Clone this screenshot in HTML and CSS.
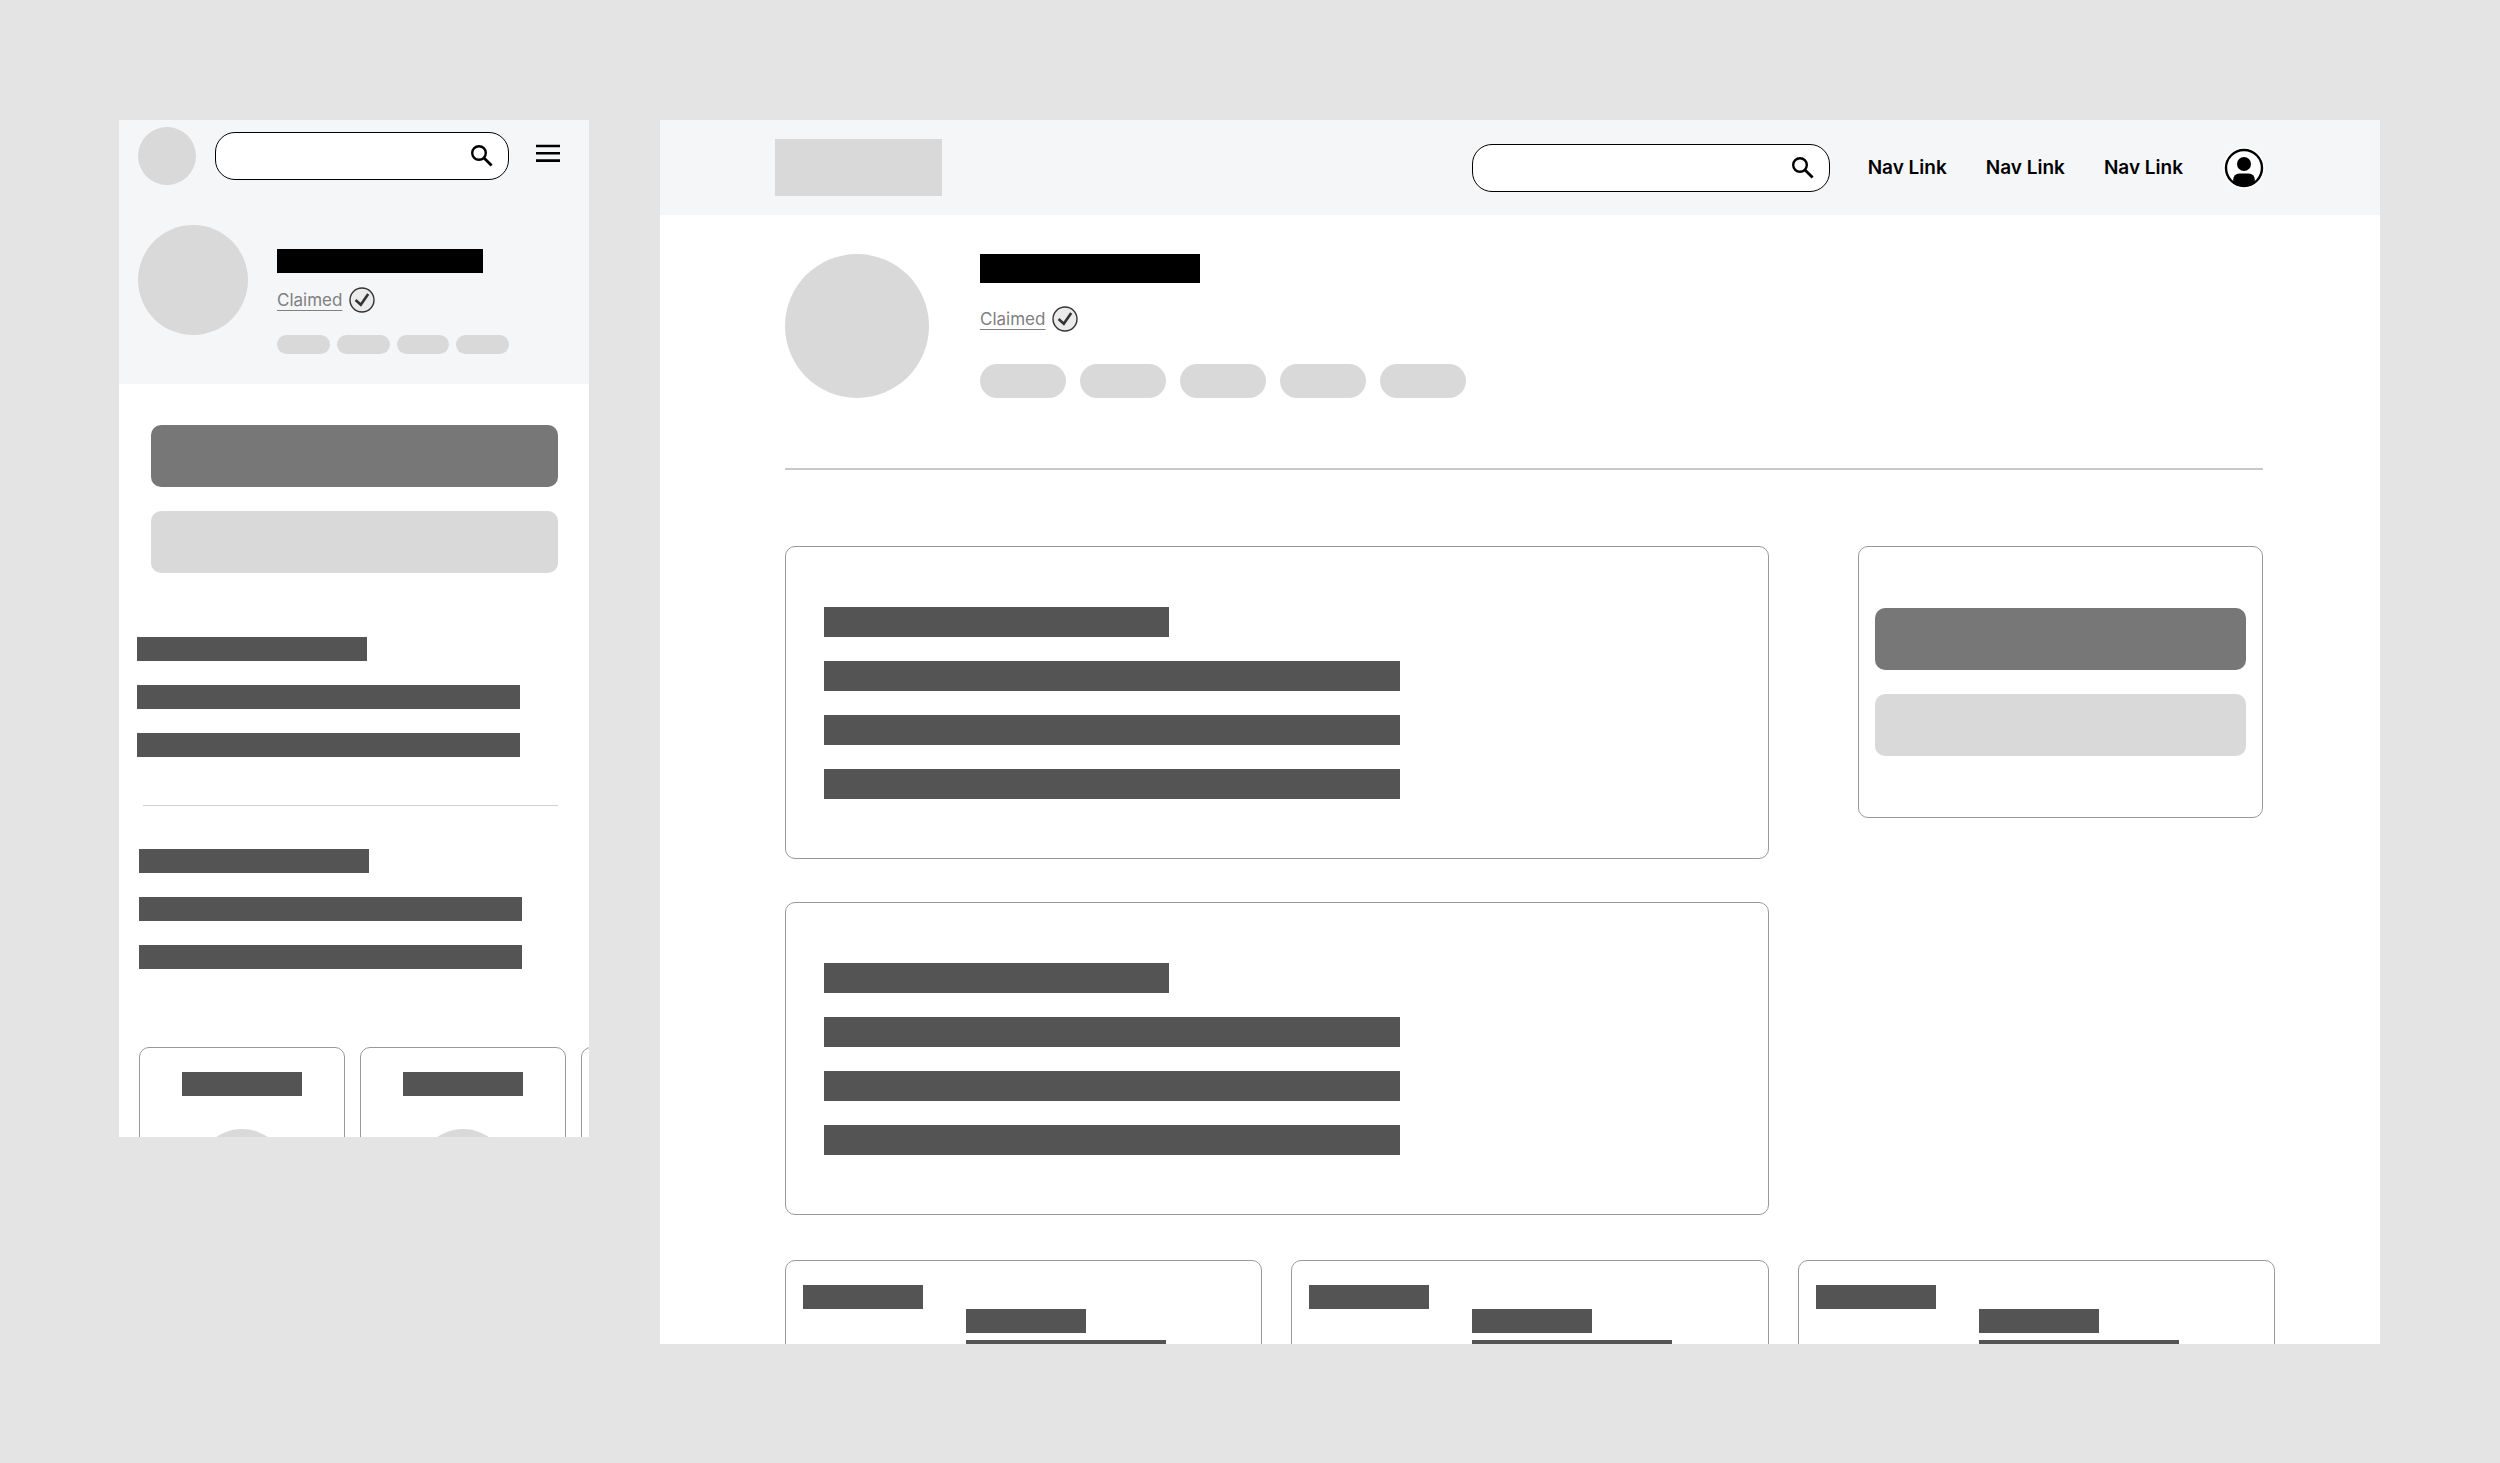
FILE: index.html
```html
<!DOCTYPE html>
<html lang="en">
<head>
    <meta charset="UTF-8">
    <meta name="viewport" content="width=device-width, initial-scale=1.0">
    <title>Profile Page Wireframes</title>
    <link rel="stylesheet" href="styles.css">
</head>
<body>
    <!-- Mobile -->
    <section class="frame mobile">
        <header class="mobile-header">
            <div class="mobile-bar">
                <div class="mobile-logo"></div>
                <form class="search">
                    <input type="search" class="search-input" aria-label="Search">
                    <button type="button" class="icon-btn" aria-label="Submit search">
                        <svg width="22" height="22" viewBox="0 0 22 22" fill="none" stroke="#000">
                            <circle cx="8" cy="8" r="6.8" stroke-width="2.4"/>
                            <path d="M13 13l7.6 7.6" stroke-width="2.8"/>
                        </svg>
                    </button>
                </form>
                <button type="button" class="icon-btn" aria-label="Menu">
                    <svg width="24" height="24" viewBox="0 0 24 24" fill="none" stroke="#000" stroke-width="2.6">
                        <path d="M0 2h24M0 9.3h24M0 16.6h24"/>
                    </svg>
                </button>
            </div>
            <div class="profile">
                <div class="avatar"></div>
                <div class="profile-info">
                    <div class="name"></div>
                    <div class="claimed">
                        <a href="#" class="claimed-link">Claimed</a>
                        <svg width="26" height="26" viewBox="0 0 26 26" fill="none" stroke="#333">
                            <circle cx="13" cy="13" r="12" fill="#ebebeb" stroke-width="1.4"/>
                            <path d="M6.6 13l5.2 4.7 7.4-10.6" stroke-width="2.6"/>
                        </svg>
                    </div>
                    <div class="pills">
                        <span class="pill"></span>
                        <span class="pill"></span>
                        <span class="pill"></span>
                        <span class="pill"></span>
                    </div>
                </div>
            </div>
        </header>

        <div class="actions">
            <button type="button" class="btn btn-primary" aria-label="Primary action"></button>
            <button type="button" class="btn" aria-label="Secondary action"></button>
        </div>

        <div class="text-block">
            <div class="line line-title"></div>
            <div class="line"></div>
            <div class="line"></div>
        </div>
        <hr class="divider">
        <div class="text-block">
            <div class="line line-title"></div>
            <div class="line"></div>
            <div class="line"></div>
        </div>

        <div class="carousel">
            <div class="mini-card">
                <div class="line line-label"></div>
                <div class="mini-avatar"></div>
            </div>
            <div class="mini-card">
                <div class="line line-label"></div>
                <div class="mini-avatar"></div>
            </div>
            <div class="mini-card">
                <div class="line line-label"></div>
                <div class="mini-avatar"></div>
            </div>
        </div>
    </section>

    <!-- Desktop -->
    <section class="frame desktop">
        <header class="desktop-header">
            <div class="desktop-logo"></div>
            <form class="search">
                <input type="search" class="search-input" aria-label="Search">
                <button type="button" class="icon-btn" aria-label="Submit search">
                    <svg width="22" height="22" viewBox="0 0 22 22" fill="none" stroke="#000">
                        <circle cx="8" cy="8" r="6.8" stroke-width="2.4"/>
                        <path d="M13 13l7.6 7.6" stroke-width="2.8"/>
                    </svg>
                </button>
            </form>
            <nav class="nav">
                <a href="#" class="nav-link">Nav Link</a>
                <a href="#" class="nav-link">Nav Link</a>
                <a href="#" class="nav-link">Nav Link</a>
            </nav>
            <button type="button" class="icon-btn" aria-label="Account">
                <svg width="42" height="42" viewBox="0 0 42 42">
                    <circle cx="21" cy="21" r="21" fill="#fff"/>
                    <circle cx="21" cy="21" r="18" fill="none" stroke="#000" stroke-width="2.4"/>
                    <circle cx="21" cy="17" r="7" fill="#000"/>
                    <path d="M10.2 35v-2.5a6 6 0 0 1 6-6h9.6a6 6 0 0 1 6 6V35A18.5 18.5 0 0 1 10.2 35z" fill="#000"/>
                </svg>
            </button>
        </header>

        <main class="content">
            <div class="profile">
                <div class="avatar"></div>
                <div class="profile-info">
                    <div class="name"></div>
                    <div class="claimed">
                        <a href="#" class="claimed-link">Claimed</a>
                        <svg width="26" height="26" viewBox="0 0 26 26" fill="none" stroke="#333">
                            <circle cx="13" cy="13" r="12" fill="#ebebeb" stroke-width="1.4"/>
                            <path d="M6.6 13l5.2 4.7 7.4-10.6" stroke-width="2.6"/>
                        </svg>
                    </div>
                    <div class="pills">
                        <span class="pill"></span>
                        <span class="pill"></span>
                        <span class="pill"></span>
                        <span class="pill"></span>
                        <span class="pill"></span>
                    </div>
                </div>
            </div>

            <hr class="divider">

            <div class="columns">
                <div class="main-column">
                    <div class="card">
                        <div class="line line-title"></div>
                        <div class="line"></div>
                        <div class="line"></div>
                        <div class="line"></div>
                    </div>
                    <div class="card">
                        <div class="line line-title"></div>
                        <div class="line"></div>
                        <div class="line"></div>
                        <div class="line"></div>
                    </div>
                </div>
                <aside class="sidebar">
                    <button type="button" class="btn btn-primary" aria-label="Primary action"></button>
                    <button type="button" class="btn" aria-label="Secondary action"></button>
                </aside>
            </div>

            <div class="review-row">
                <div class="review">
                    <div class="line line-label"></div>
                    <div class="review-body">
                        <div class="line line-label"></div>
                        <div class="line"></div>
                    </div>
                </div>
                <div class="review">
                    <div class="line line-label"></div>
                    <div class="review-body">
                        <div class="line line-label"></div>
                        <div class="line"></div>
                    </div>
                </div>
                <div class="review">
                    <div class="line line-label"></div>
                    <div class="review-body">
                        <div class="line line-label"></div>
                        <div class="line"></div>
                    </div>
                </div>
            </div>
        </main>
    </section>
</body>
</html>
```
FILE: styles.css
```css
* {
    margin: 0;
    padding: 0;
    box-sizing: border-box;
}

body {
    display: grid;
    grid-template-columns: minmax(0, 470fr) minmax(0, 1720fr);
    gap: 71px;
    align-items: start;
    min-height: 100vh;
    padding: 120px 120px 120px 119px;
    background: #e4e4e4;
    color: #000;
    font-family: Inter, 'Liberation Sans', sans-serif;
}

.frame {
    background: #fff;
    overflow: hidden;
}

/* Shared parts */
.search {
    display: flex;
    align-items: center;
    height: 48px;
    padding-right: 15px;
    background: #fff;
    border: 1px solid #000;
    border-radius: 20px;
}

.search-input {
    flex: 1;
    min-width: 0;
    height: 100%;
    padding: 0 16px;
    border: none;
    outline: none;
    background: transparent;
    font: inherit;
}

.icon-btn {
    display: flex;
    flex-shrink: 0;
    border: none;
    background: none;
    cursor: pointer;
}

.profile {
    display: flex;
}

.avatar {
    flex-shrink: 0;
    width: 144px;
    height: 144px;
    border-radius: 50%;
    background: #d9d9d9;
}

.profile-info {
    flex: 1;
    min-width: 0;
}

.name {
    width: 220px;
    height: 29px;
    background: #000;
}

.claimed {
    display: flex;
    align-items: center;
    gap: 7px;
}

.claimed-link {
    color: #808080;
    font-size: 17px;
    line-height: 26px;
    text-underline-offset: 4px;
    text-decoration-thickness: 1px;
}

.pills {
    display: flex;
    gap: 14px;
}

.pill {
    width: 86px;
    height: 34px;
    border-radius: 17px;
    background: #d9d9d9;
}

.divider {
    border: none;
    height: 2px;
    background: #d0d0d0;
}

.btn {
    display: block;
    width: 100%;
    height: 62px;
    border: none;
    border-radius: 10px;
    background: #d9d9d9;
    cursor: pointer;
}

.btn-primary {
    margin-bottom: 24px;
    background: #777;
}

.line {
    height: 24px;
    max-width: 100%;
    background: #545454;
}

.line-label {
    width: 120px;
}

/* Mobile */
.mobile-header {
    padding: 7px 29px 30px 19px;
    background: #f4f6f8;
}

.mobile-bar {
    display: flex;
    align-items: center;
}

.mobile-bar .search {
    flex: 1;
    min-width: 0;
    margin: 0 27px 0 19px;
}

.mobile-logo {
    flex-shrink: 0;
    width: 58px;
    height: 58px;
    border-radius: 50%;
    background: #d9d9d9;
}

.mobile .profile {
    gap: 29px;
    margin-top: 40px;
    padding-right: 51px;
}

.mobile .avatar {
    width: 110px;
    height: 110px;
}

.mobile .profile-info {
    padding-top: 24px;
}

.mobile .name {
    width: 206px;
    height: 24px;
}

.mobile .claimed {
    margin: 14px 0 22px;
}

.mobile .pills {
    gap: 7px;
}

.mobile .pill {
    flex: 1;
    min-width: 0;
    height: 19px;
}

.actions {
    padding: 41px 31px 64px 32px;
}

.text-block {
    display: grid;
    gap: 24px;
    padding: 0 18px;
}

.divider + .text-block {
    padding: 0 20px;
}

.text-block .line {
    width: 383px;
}

.text-block .line-title {
    width: 230px;
}

.mobile .divider {
    height: 1px;
    margin: 48px 31px 43px 24px;
}

.carousel {
    display: flex;
    gap: 15px;
    height: 90px;
    margin-top: 78px;
    padding-left: 20px;
    overflow: hidden;
}

.mini-card {
    display: flex;
    flex-direction: column;
    flex-shrink: 0;
    align-items: center;
    gap: 33px;
    width: 206px;
    height: 260px;
    padding-top: 24px;
    border: 1px solid #999;
    border-radius: 10px;
}

.mini-avatar {
    width: 90px;
    height: 90px;
    border-radius: 50%;
    background: #d9d9d9;
}

/* Desktop */
.desktop-header {
    display: flex;
    align-items: center;
    height: 95px;
    padding: 0 115px;
    background: #f4f6f8;
}

.desktop-logo {
    width: 167px;
    height: 57px;
    margin-right: auto;
    background: #d9d9d9;
}

.desktop-header .search {
    width: 358px;
}

.nav {
    display: flex;
    gap: 39px;
    margin: 0 40px 0 38px;
}

.nav-link {
    color: #000;
    font-size: 19px;
    font-weight: 600;
    line-height: 24px;
    text-decoration: none;
}

.content {
    padding: 39px 117px 0 125px;
}

.desktop .profile {
    gap: 51px;
}

.desktop .claimed {
    margin: 23px 0 32px;
}

.desktop .divider {
    margin: 70px 0 76px;
    background: #c8c8c8;
}

.columns {
    display: grid;
    grid-template-columns: 984fr 405fr;
    align-items: start;
    gap: 89px;
}

.main-column {
    display: grid;
    gap: 43px;
}

.card {
    display: grid;
    gap: 24px;
    padding: 60px 38px 59px;
    border: 1px solid #999;
    border-radius: 10px;
}

.card .line {
    width: 576px;
    height: 30px;
}

.card .line-title {
    width: 345px;
}

.sidebar {
    padding: 61px 16px;
    border: 1px solid #999;
    border-radius: 10px;
}

.review-row {
    display: grid;
    grid-template-columns: repeat(3, 1fr);
    gap: 29px;
    height: 84px;
    margin: 45px -12px 0 0;
    overflow: hidden;
}

.review {
    height: 220px;
    padding: 24px 17px;
    border: 1px solid #999;
    border-radius: 10px;
}

.review-body {
    display: grid;
    gap: 7px;
    padding-left: 163px;
}

.review-body .line {
    width: 200px;
}

.review-body .line-label {
    width: 120px;
}
```
